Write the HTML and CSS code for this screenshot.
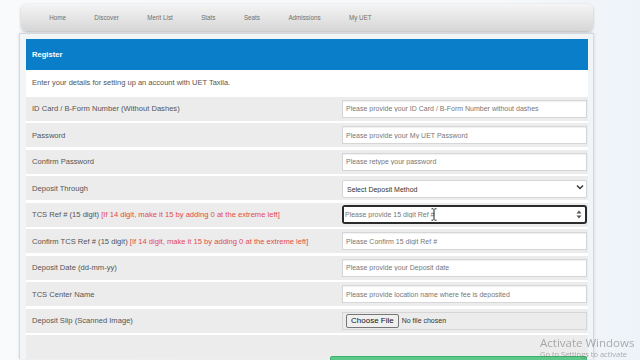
FILE: index.html
```html
<!DOCTYPE html>
<html lang="en">
<head>
    <meta charset="UTF-8">
    <meta name="viewport" content="width=device-width, initial-scale=1.0">
    <title>UET Taxila - Register</title>
    <link rel="stylesheet" href="styles.css">
</head>
<body>
    <nav class="nav">
        <a href="#">Home</a>
        <a href="#">Discover</a>
        <a href="#">Merit List</a>
        <a href="#">Stats</a>
        <a href="#">Seats</a>
        <a href="#">Admissions</a>
        <a href="#">My UET</a>
    </nav>

    <div class="card">
        <div class="panel">
            <div class="panel-head">Register</div>
            <div class="intro">Enter your details for setting up an account with UET Taxila.</div>

            <div class="row">
                <label>ID Card / B-Form Number (Without Dashes)</label>
                <input type="text" placeholder="Please provide your ID Card / B-Form Number without dashes">
            </div>
            <div class="row">
                <label>Password</label>
                <input type="password" placeholder="Please provide your My UET Password">
            </div>
            <div class="row">
                <label>Confirm Password</label>
                <input type="password" placeholder="Please retype your password">
            </div>
            <div class="row">
                <label>Deposit Through</label>
                <div class="select-wrap">
                    <select>
                        <option>Select Deposit Method</option>
                        <option>TCS</option>
                        <option>Bank</option>
                    </select>
                    <svg class="chevron" width="8" height="6" viewBox="0 0 8 6"><path d="M1 1.5 L4 4.5 L7 1.5" fill="none" stroke="#333" stroke-width="1.4"/></svg>
                </div>
            </div>
            <div class="row">
                <label>TCS Ref # (15 digit) <span class="hint">[If 14 digit, make it 15 by adding 0 at the extreme left]</span></label>
                <div class="focus-box">
                    <input type="text" placeholder="Please provide 15 digit Ref #">
                    <svg class="spinner" width="6" height="9" viewBox="0 0 6 9"><path d="M3 0.5 L5.5 3.5 H0.5 Z M3 8.5 L5.5 5.5 H0.5 Z" fill="#555"/></svg>
                    <svg class="ibeam" width="6" height="13" viewBox="0 0 6 13"><path d="M0.5 0.8 H2.3 M3.7 0.8 H5.5 M3 1 V12 M0.5 12.2 H2.3 M3.7 12.2 H5.5" fill="none" stroke="#222" stroke-width="1"/></svg>
                </div>
            </div>
            <div class="row">
                <label>Confirm TCS Ref # (15 digit) <span class="hint">[If 14 digit, make it 15 by adding 0 at the extreme left]</span></label>
                <input type="text" placeholder="Please Confirm 15 digit Ref #">
            </div>
            <div class="row">
                <label>Deposit Date (dd-mm-yy)</label>
                <input type="text" placeholder="Please provide your Deposit date">
            </div>
            <div class="row">
                <label>TCS Center Name</label>
                <input type="text" placeholder="Please provide location name where fee is deposited">
            </div>
            <div class="row">
                <label>Deposit Slip (Scanned Image)</label>
                <div class="file-box">
                    <button type="button" class="file-btn">Choose File</button>
                    <span>No file chosen</span>
                </div>
            </div>
            <div class="row row-submit">
                <button type="submit" class="submit"></button>
            </div>
        </div>
    </div>

    <div class="watermark">
        <div class="wm-title">Activate Windows</div>
        <div class="wm-sub">Go to Settings to activate</div>
    </div>
</body>
</html>
```

FILE: styles.css
```css
body {
    margin: 0;
    height: 360px;
    overflow: hidden;
    font-family: Arial, "Liberation Sans", sans-serif;
    background: linear-gradient(to right, #f9fafb 0%, #f6f8fa 80%, #eef3f9 100%);
}
.nav {
    display: flex;
    align-items: center;
    height: 27px;
    margin: 4px 47px 0 21px;
    padding-left: 14px;
    border-radius: 6px;
    background: linear-gradient(#f5f5f5, #d6d6d6);
    box-shadow: 0 1px 3px rgba(0,0,0,0.25);
}
.nav a {
    padding: 0 14.2px;
    font-size: 6.3px;
    color: #707070;
    text-decoration: none;
}
.card {
    margin: 2px 46px 0 19px;
    padding: 5px 5px 0 6px;
    border: 1px solid #d3d8de;
    border-bottom: none;
    background: #f2f5f8;
    box-shadow: 0 0 3px rgba(0,0,0,0.12);
}
.panel {
    background: #fff;
}
.panel-head {
    height: 31px;
    line-height: 31px;
    padding-left: 6px;
    background: #0a7ec8;
    color: #fff;
    font-weight: bold;
    font-size: 7.6px;
}
.intro {
    height: 26.5px;
    line-height: 26px;
    padding-left: 6px;
    font-size: 7.5px;
    color: #555;
}
.row {
    display: grid;
    grid-template-columns: 1fr 245px;
    align-items: center;
    height: 24px;
    margin-bottom: 2.5px;
    padding-right: 1px;
    background: #ececec;
}
.row label {
    padding-left: 6px;
    font-size: 7.6px;
    color: #555;
}
.hint {
    color: #e04b4b;
}
.row input {
    box-sizing: border-box;
    width: 100%;
    height: 18px;
    padding: 0 3px;
    border: 1px solid #d6d6d6;
    box-shadow: inset 0 1px 1px rgba(0,0,0,0.06);
    background: #fff;
    font-family: Arial, "Liberation Sans", sans-serif;
    font-size: 7px;
    outline: none;
}
.row input::placeholder {
    color: #777;
}
.select-wrap {
    position: relative;
}
.select-wrap select {
    appearance: none;
    box-sizing: border-box;
    width: 100%;
    height: 18px;
    padding: 0 4px;
    border: 1px solid #d6d6d6;
    border-radius: 2px;
    background: #fff;
    font-family: Arial, "Liberation Sans", sans-serif;
    font-size: 7px;
    color: #333;
}
.chevron {
    position: absolute;
    right: 3px;
    top: 6px;
}
.focus-box {
    position: relative;
    display: flex;
    align-items: center;
    box-sizing: border-box;
    height: 19px;
    border: 2px solid #2b2b2b;
    border-radius: 3px;
    background: #fff;
}
.row .focus-box input {
    height: 15px;
    border: none;
    box-shadow: none;
    padding-left: 1px;
}
.spinner {
    flex: none;
    margin-right: 3px;
}
.ibeam {
    position: absolute;
    left: 87px;
    top: 1px;
}
.file-box {
    display: flex;
    align-items: center;
    gap: 3px;
    box-sizing: border-box;
    height: 18px;
    padding-left: 3px;
    border: 1px solid #d6d6d6;
    background: #ececec;
    font-size: 7px;
    color: #333;
}
.file-btn {
    height: 14px;
    padding: 0 4px;
    border: 1px solid #767676;
    border-radius: 2px;
    background: #efefef;
    font-family: Arial, "Liberation Sans", sans-serif;
    font-size: 8px;
    color: #111;
}
.row-submit {
    display: flex;
    justify-content: flex-end;
    align-items: flex-start;
}
.submit {
    width: 257px;
    height: 20px;
    margin-top: 21px;
    border: 1px solid #38b468;
    border-radius: 2px;
    background: #5cc98a;
}
.watermark {
    position: fixed;
    left: 540px;
    top: 336px;
    font-family: "Open Sans", "Noto Sans", sans-serif;
    color: rgba(110,110,110,0.55);
    white-space: nowrap;
}
.wm-title {
    font-size: 11.5px;
    line-height: 14px;
}
.wm-sub {
    font-size: 7.5px;
    line-height: 9px;
}
```
